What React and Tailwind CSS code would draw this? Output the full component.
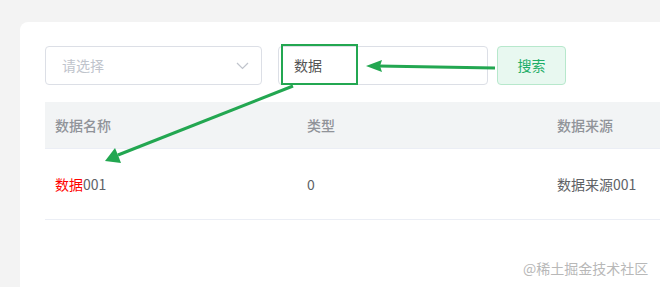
import React from "react";

const font = { fontFamily: '"Noto Sans CJK SC", "Noto Sans", sans-serif' };

export default function App() {
  return (
    <div
      className="relative w-[660px] h-[287px] overflow-hidden bg-[#f3f3f3]"
      style={font}
    >
      {/* card */}
      <div className="absolute left-[20px] top-[22px] w-[700px] h-[300px] rounded-lg bg-white pl-[25px] pt-[24px]">
        {/* search bar */}
        <div className="flex items-center">
          <div className="flex h-[39px] w-[217px] items-center justify-between rounded border border-[#dcdfe6] pl-[16px] pr-[12px] text-[14px] text-[#c0c4cc]">
            <span>请选择</span>
            <svg width="13" height="8" viewBox="0 0 13 8" fill="none">
              <path d="M1 1l5.5 5.5L12 1" stroke="#c0c4cc" strokeWidth="1.2" />
            </svg>
          </div>
          <div className="ml-[16px] flex h-[39px] w-[210px] items-center rounded border border-[#dcdfe6] pl-[15px] text-[14px] text-[#555]">
            数据
          </div>
          <button className="ml-[9px] h-[39px] w-[69px] rounded border border-[#b7e8cc] bg-[#e8f8f0] text-[14px] text-[#1fae68]">
            搜索
          </button>
        </div>

        {/* table */}
        <div className="mt-[17px] text-[14px]">
          <div className="flex h-[47px] items-center border-b border-[#ebeef5] bg-[#f2f4f5] font-medium text-[#909399]">
            <div className="w-[262px] pl-[10px]">数据名称</div>
            <div className="w-[250px]">类型</div>
            <div className="flex-1">数据来源</div>
          </div>
          <div className="flex h-[71px] items-center border-b border-[#ebeef5] text-[#606266]">
            <div className="w-[262px] pl-[10px]">
              <span className="text-[#ff0000]">数据</span>001
            </div>
            <div className="w-[250px]">0</div>
            <div className="flex-1">数据来源001</div>
          </div>
        </div>
      </div>

      {/* annotation overlay */}
      <svg
        className="absolute left-0 top-0"
        width="660"
        height="287"
        viewBox="0 0 660 287"
      >
        <rect x="282" y="45" width="75" height="39" fill="none" stroke="#23a751" strokeWidth="2" />
        <line x1="495" y1="68" x2="378" y2="66" stroke="#23a751" strokeWidth="3" />
        <polygon points="366,66 382,60 380,66 382,72" fill="#23a751" />
        <line x1="293" y1="86" x2="118" y2="155" stroke="#23a751" strokeWidth="3" />
        <polygon points="105,161 115,148 118,155 121,163" fill="#23a751" />
      </svg>

      <div className="absolute left-[523px] top-[258px] text-[14px] text-[#b8b8b8]">
        @稀土掘金技术社区
      </div>
    </div>
  );
}
